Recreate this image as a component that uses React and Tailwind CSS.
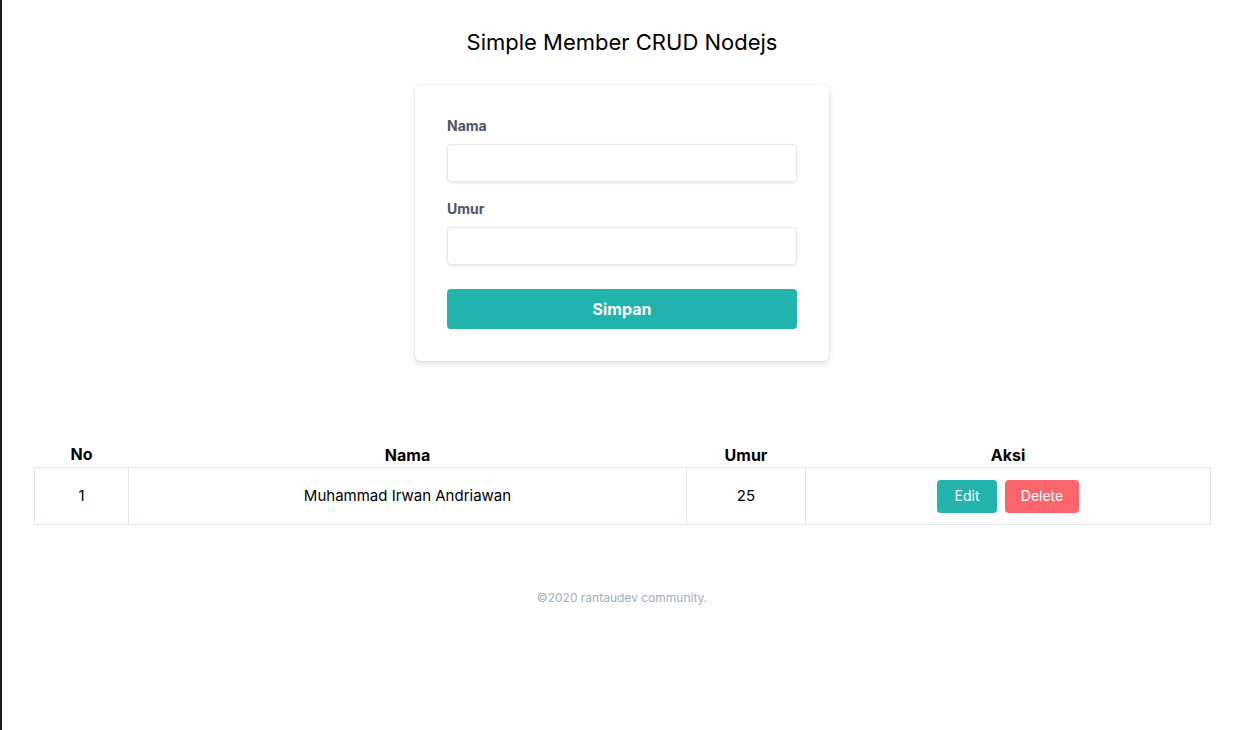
import React, { useState } from "react";

const members = [{ id: 1, nama: "Muhammad Irwan Andriawan", umur: 25 }];

const App = () => {
  const [nama, setNama] = useState("");
  const [umur, setUmur] = useState("");

  return (
    <div className="h-[730px] bg-white border-l-2 border-[#1c1f22] text-black" style={{ fontFamily: "Inter, 'Noto Sans', sans-serif" }}>
      <div className="pt-[26px]">
        <h1 className="text-center text-[22px] leading-8">Simple Member CRUD Nodejs</h1>

        <div className="w-[414px] mx-auto mt-[27px] bg-white rounded-md shadow-[0_0_0_1px_rgba(0,0,0,0.03),0_3px_6px_rgba(0,0,0,0.12)] px-8 pt-[31px] pb-8">
          <label className="block text-sm font-bold text-[#4a5568] mb-2 leading-5">Nama</label>
          <input
            className="w-full h-[38px] rounded border border-[#e2e8f0] shadow-[0_1px_3px_rgba(0,0,0,0.1)] px-3 outline-none"
            value={nama}
            onChange={(e) => setNama(e.target.value)}
          />
          <label className="block text-sm font-bold text-[#4a5568] mt-[17px] mb-2 leading-5">Umur</label>
          <input
            className="w-full h-[38px] rounded border border-[#e2e8f0] shadow-[0_1px_3px_rgba(0,0,0,0.1)] px-3 outline-none"
            value={umur}
            onChange={(e) => setUmur(e.target.value)}
          />
          <button className="w-full h-10 mt-6 rounded bg-[#22b3ac] text-white font-bold text-base">Simpan</button>
        </div>

        <div className="pl-8 pr-[31px] mt-[81px]">
          <table className="w-full border-collapse table-fixed">
            <thead>
              <tr>
                <th className="w-[94px] h-[25px] pb-px font-bold text-base leading-6">No</th>
                <th className="w-[558px] font-bold text-base leading-6">Nama</th>
                <th className="w-[119px] font-bold text-base leading-6">Umur</th>
                <th className="font-bold text-base leading-6">Aksi</th>
              </tr>
            </thead>
            <tbody>
              {members.map((val) => (
                <tr key={val.id}>
                  <td className="border border-[#e2e8f0] h-[57px] text-center text-[15px]">{val.id}</td>
                  <td className="border border-[#e2e8f0] text-center text-[15px]">{val.nama}</td>
                  <td className="border border-[#e2e8f0] text-center text-[15px]">{val.umur}</td>
                  <td className="border border-[#e2e8f0] text-center">
                    <div className="flex flex-row justify-center gap-2">
                      <button className="w-[60px] h-[33px] rounded bg-[#22b3ac] text-white text-sm">Edit</button>
                      <button className="w-[74px] h-[33px] rounded bg-[#fc646b] text-white text-sm">Delete</button>
                    </div>
                  </td>
                </tr>
              ))}
            </tbody>
          </table>
        </div>

        <p className="text-center text-xs text-[#a0aec0] mt-[65px] leading-4">©2020 rantaudev community.</p>
      </div>
    </div>
  );
};

export default App;
